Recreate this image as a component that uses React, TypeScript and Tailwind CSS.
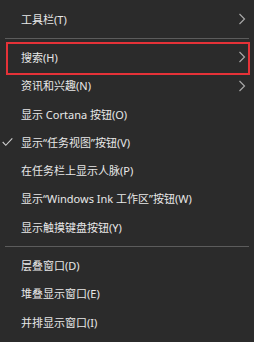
const items: ({ label: string; sub?: boolean; checked?: boolean; boxed?: boolean } | "sep")[] = [
  { label: "工具栏(T)", sub: true },
  "sep",
  { label: "搜索(H)", sub: true, boxed: true },
  { label: "资讯和兴趣(N)", sub: true },
  { label: "显示 Cortana 按钮(O)" },
  { label: "显示\u201c任务视图\u201d按钮(V)", checked: true },
  { label: "在任务栏上显示人脉(P)" },
  { label: "显示\u201cWindows Ink 工作区\u201d按钮(W)" },
  { label: "显示触摸键盘按钮(Y)" },
  "sep",
  { label: "层叠窗口(D)" },
  { label: "堆叠显示窗口(E)" },
  { label: "并排显示窗口(I)" },
];

function Chevron() {
  return (
    <svg width="8" height="12" viewBox="0 0 8 12" className="absolute right-[8px] top-1/2 -translate-y-1/2">
      <path d="M1.5 1 L6.5 6 L1.5 11" fill="none" stroke="#a8a8a8" strokeWidth="1.2" />
    </svg>
  );
}

function Check() {
  return (
    <svg width="11" height="9" viewBox="0 0 11 9" className="absolute left-[2px] top-1/2 -translate-y-1/2">
      <path d="M0.7 4.5 L3.8 7.8 L10.3 0.8" fill="none" stroke="#cfcfcf" strokeWidth="1.1" />
    </svg>
  );
}

export default function App() {
  return (
    <div
      className="h-[342px] w-[254px] overflow-hidden bg-[#2b2b2b] pt-[5px] text-[11px] text-[#e8e8e8]"
      style={{ fontFamily: '"Noto Sans", "Noto Sans CJK SC", sans-serif' }}
    >
      {items.map((it, i) =>
        it === "sep" ? (
          <div key={i} className="flex h-[10px] items-center px-[5px]">
            <div className="h-px w-full bg-[#5c5c5c]" />
          </div>
        ) : (
          <div key={i} className="relative flex h-[28.3px] items-center pl-[21px]">
            {it.checked && <Check />}
            <span className="leading-none">{it.label}</span>
            {it.sub && <Chevron />}
            {it.boxed && (
              <div className="absolute -top-[1px] -bottom-[3px] left-[6px] right-[4px] border-[2.5px] border-[#e53238]" />
            )}
          </div>
        )
      )}
    </div>
  );
}
